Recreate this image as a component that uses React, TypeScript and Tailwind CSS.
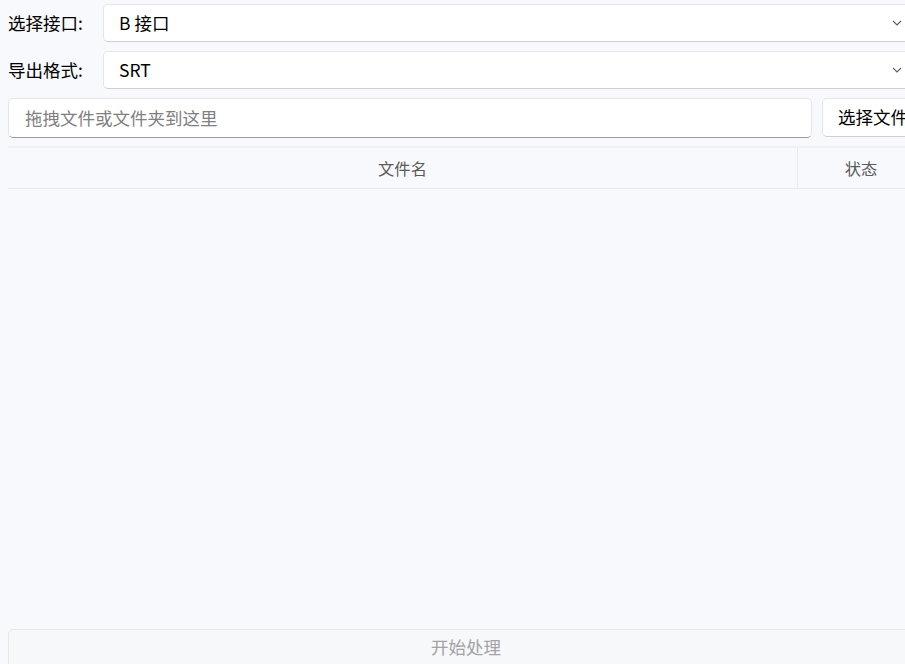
import React from 'react';

const font = { fontFamily: '"Noto Sans CJK SC", "Noto Sans", sans-serif' };

function Chevron() {
  return (
    <svg width="10" height="6" viewBox="0 0 10 6" className="absolute right-[21px] top-1/2 -translate-y-1/2">
      <path d="M1 1 L5 5 L9 1" fill="none" stroke="#5f5f5f" strokeWidth="1.1" />
    </svg>
  );
}

function ComboRow({ label, value }: { label: string; value: string }) {
  return (
    <div className="flex items-center h-[38px]">
      <span className="w-[95px] text-[17.5px] text-black leading-none">{label}</span>
      <div className="relative flex-1 h-full flex items-center pl-[15px] bg-white rounded-[5px] border border-[#e6e6e6] border-b-[#cfcfcf] text-[17.5px] text-black">
        {value}
        <Chevron />
      </div>
    </div>
  );
}

export default function App() {
  return (
    <div className="w-full h-[664px] overflow-hidden bg-[#f8f9fc]" style={font}>
      <div className="w-[932px] h-full flex flex-col px-2 pt-1">
        <div className="flex flex-col gap-[9px]">
          <ComboRow label="选择接口:" value="B 接口" />
          <ComboRow label="导出格式:" value="SRT" />
        </div>

        {/* drop target + picker */}
        <div className="flex gap-[10px] mt-[9px] h-[40px]">
          <div className="flex-1 flex items-center pl-[16px] bg-white rounded-[5px] border border-[#e6e6e6] border-b-[#9a9a9a] text-[17.5px] text-[#808080]">
            拖拽文件或文件夹到这里
          </div>
          <button className="w-[102px] h-[39px] bg-white rounded-[5px] border border-[#e6e6e6] border-b-[#cfcfcf] text-[17.5px] text-black text-left pl-[15px]">
            选择文件
          </button>
        </div>

        {/* file table */}
        <div className="flex flex-col flex-1 mt-[8px]">
          <div className="flex h-[43px] border-t-2 border-b border-t-[#eef0f3] border-b-[#e8e9ec] text-[16.3px] text-[#5a5a5a]">
            <div className="w-[790px] flex items-center justify-center border-r border-[#e8e9ec]">文件名</div>
            <div className="flex-1 flex items-center justify-center">状态</div>
          </div>
          <div className="flex-1" />
        </div>

        <button className="h-[40px] mb-[-5px] rounded-[5px] border border-[#e6e7ea] bg-[#f7f8fa] text-[17.5px] text-[#a3a3a3] flex items-center justify-center pb-[4px]">
          开始处理
        </button>
      </div>
    </div>
  );
}
